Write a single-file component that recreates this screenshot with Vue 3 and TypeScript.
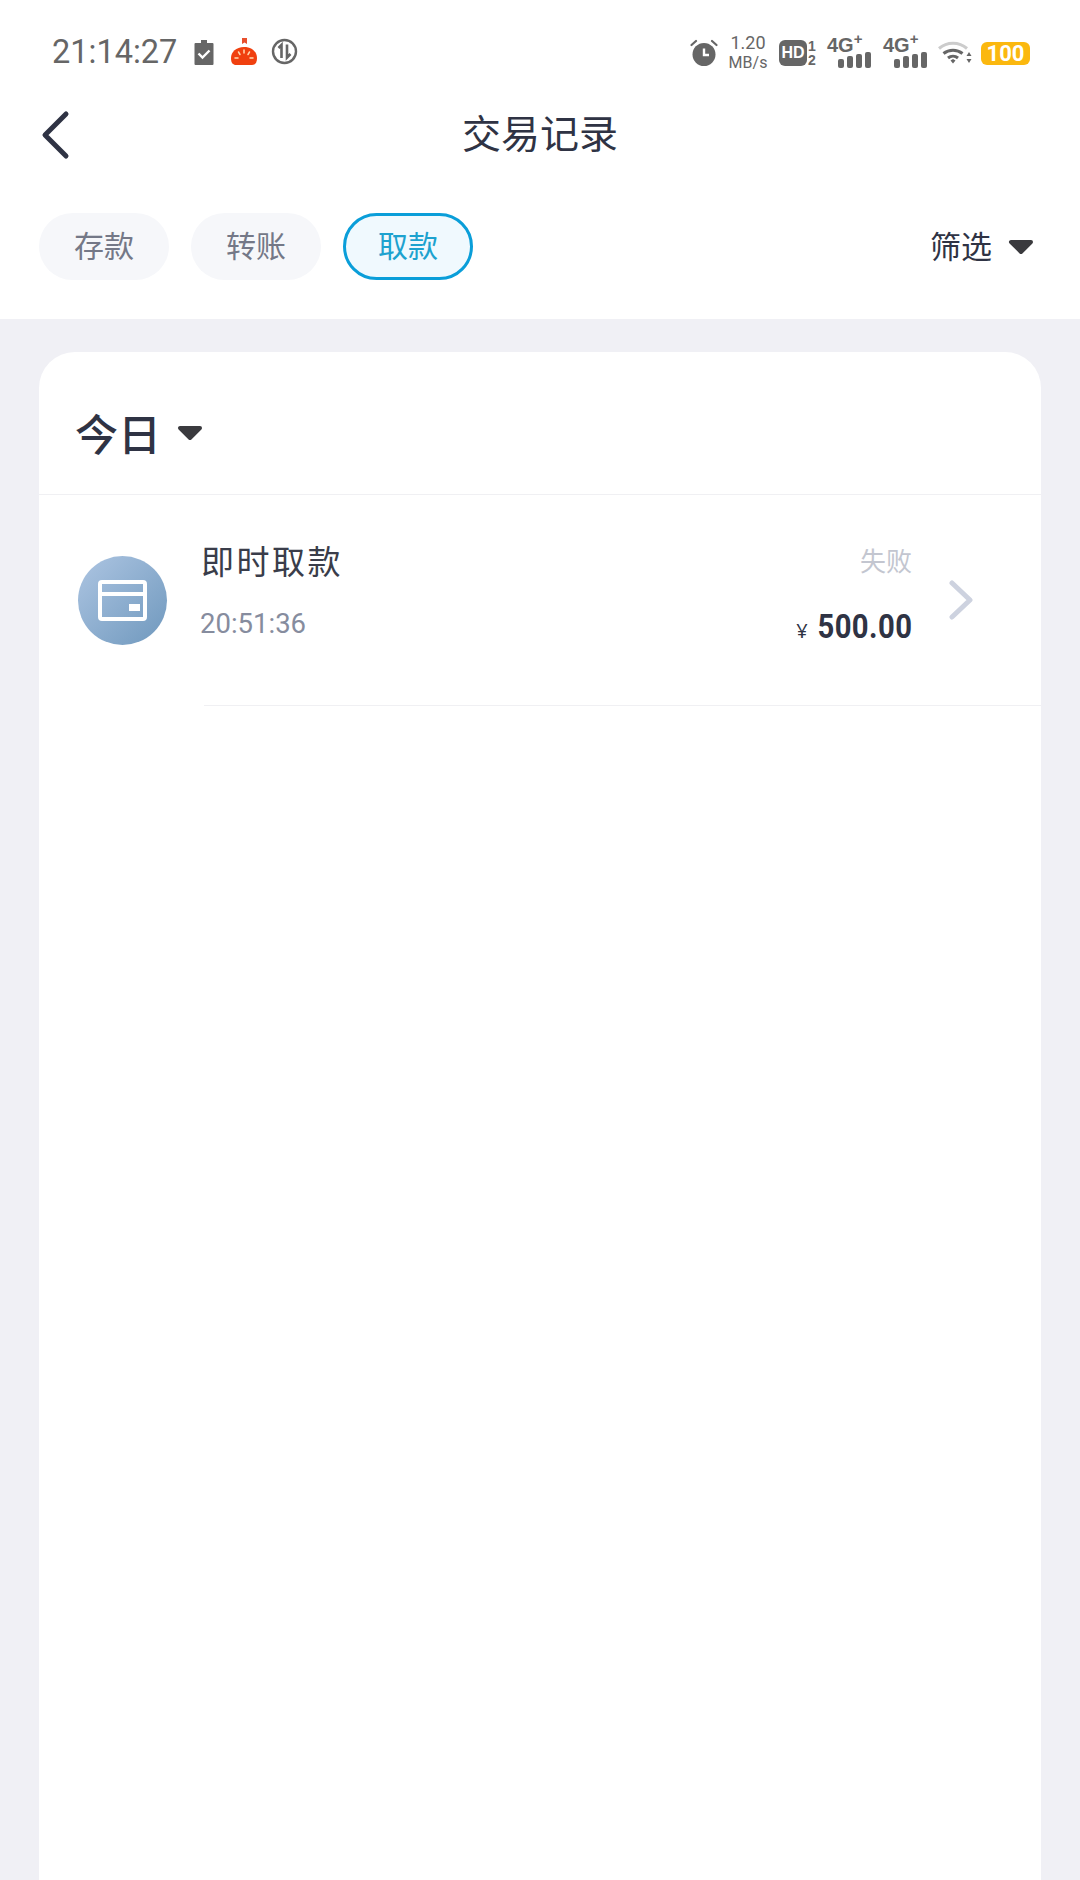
<template>
  <div class="page">
    <header class="top">
      <div class="status-bar">
        <div class="status-left">
          <span class="clock">21:14:27</span>
          <svg class="ic-task" width="20" height="26" viewBox="0 0 20 26">
            <path d="M7 1h6v3h5.500a1 1 0 0 1 1 1V25a1 1 0 0 1-1 1H1.500a1 1 0 0 1-1-1V5a1 1 0 0 1 1-1H7z" fill="#666" />
            <path d="M4.500 14.500l4 4 7-7" fill="none" stroke="#fff" stroke-width="2.400" />
          </svg>
          <svg class="ic-app" width="28" height="28" viewBox="0 0 28 28">
            <path d="M12 0h5v6l-2.500-1.500L12 6z" fill="#e8502e" />
            <path d="M14 9c8 0 13 5 13 11 0 5-2 7-5 7H6c-3 0-5-2-5-7C1 14 6 9 14 9z" fill="#f0400f" />
            <path d="M14 12v3M8.500 14l1.500 2.500M19.500 14L18 16.500M5 20h3M20 20h3" stroke="#ffd9b0" stroke-width="1.500" stroke-linecap="round" />
          </svg>
          <svg class="ic-data" width="27" height="27" viewBox="0 0 27 27">
            <circle cx="13.500" cy="13.500" r="11.500" fill="none" stroke="#666" stroke-width="2.400" />
            <path d="M10.500 20V7L7.500 10M16 6.500v13l3.500-3.500" fill="none" stroke="#666" stroke-width="2.600" />
          </svg>
        </div>
        <div class="status-right">
          <svg class="ic-alarm" width="28" height="28" viewBox="0 0 28 28">
            <path d="M1.500 6L6 2M26.500 6L22 2" stroke="#666" stroke-width="2.200" stroke-linecap="round" />
            <circle cx="14" cy="15.500" r="11.500" fill="#666" />
            <path d="M14 9.500v6.500h5" fill="none" stroke="#fff" stroke-width="2.400" />
          </svg>
          <div class="speed"><span class="speed-num">1.20</span><span>MB/s</span></div>
          <div class="hd">
            <span class="hd-box">HD</span>
            <span class="hd-nums"><span>1</span><span>2</span></span>
          </div>
          <div v-for="n in 2" :key="n" class="signal">
            <span class="net">4G<sup>+</sup></span>
            <div class="bars">
              <i v-for="h in barHeights" :key="h" :style="{ height: h + 'px' }"></i>
            </div>
          </div>
          <svg class="ic-wifi" width="34" height="26" viewBox="0 0 34 26">
            <path d="M1 8.500C9 1.500 21 1.500 29 8.500" fill="none" stroke="#ccc" stroke-width="3" />
            <path d="M5.500 13.500c5.500-4.500 13.500-4.500 19 0" fill="none" stroke="#666" stroke-width="3" />
            <path d="M10 18c3-2.500 7-2.500 10 0" fill="none" stroke="#666" stroke-width="3" />
            <path d="M12.500 20.500l2.500-1.500 2.500 1.500-2.500 3z" fill="#666" />
            <path d="M31 12l2.500 4h-5zM31 23l-2.500-4h5z" fill="#666" />
          </svg>
          <div class="battery">100</div>
        </div>
      </div>

      <div class="nav">
        <svg class="back" width="30" height="50" viewBox="0 0 30 50">
          <path d="M26 4L5 25l21 21" fill="none" stroke="#2f3344" stroke-width="5" stroke-linecap="round" stroke-linejoin="round" />
        </svg>
        <h1 class="title">交易记录</h1>
      </div>

      <div class="tabs">
        <button
          v-for="tab in tabs"
          :key="tab"
          class="tab"
          :class="{ active: tab === currentTab }"
          @click="currentTab = tab"
        >
          {{ tab }}
        </button>
        <div class="filter">
          <span class="filter-label">筛选</span>
          <svg class="caret" width="26" height="16" viewBox="0 0 26 16">
            <path d="M3 3h20L13 13z" fill="#3a3a3e" stroke="#3a3a3e" stroke-width="4" stroke-linejoin="round" />
          </svg>
        </div>
      </div>
    </header>

    <main class="content">
      <section class="card">
        <div class="card-head">
          <span>今日</span>
          <svg class="caret" width="26" height="16" viewBox="0 0 26 16">
            <path d="M3 3h20L13 13z" fill="#3a3a3e" stroke="#3a3a3e" stroke-width="4" stroke-linejoin="round" />
          </svg>
        </div>
        <div class="record">
          <div class="avatar">
            <svg width="49" height="41" viewBox="0 0 49 41">
              <rect x="2" y="2" width="45" height="37" rx="2" fill="none" stroke="#fff" stroke-width="4" />
              <rect x="2" y="12" width="45" height="4" fill="#fff" />
              <rect x="31" y="24" width="11" height="7" fill="#fff" />
            </svg>
          </div>
          <div class="record-main">
            <div class="record-name">{{ record.name }}</div>
            <div class="record-time">{{ record.time }}</div>
          </div>
          <div class="record-side">
            <div class="record-status">{{ record.status }}</div>
            <div class="record-amount"><small>¥</small><span class="amount-num">{{ record.amount }}</span></div>
          </div>
          <svg class="arrow" width="24" height="40" viewBox="0 0 24 40">
            <path d="M3 3l18 17L3 37" fill="none" stroke="#cdd2df" stroke-width="5" stroke-linecap="round" stroke-linejoin="round" />
          </svg>
        </div>
      </section>
    </main>
  </div>
</template>

<script setup lang="ts">
import { ref } from 'vue';

interface TradeRecord {
  name: string;
  time: string;
  status: string;
  amount: string;
}

const tabs = ['存款', '转账', '取款'];
const currentTab = ref('取款');
const barHeights = [9, 12, 14, 16];

const record: TradeRecord = {
  name: '即时取款',
  time: '20:51:36',
  status: '失败',
  amount: '500.00',
};
</script>

<style>
html,
body {
  margin: 0;
  background: #f0f0f5;
}
</style>

<style scoped>
.page {
  width: 1080px;
  height: 1880px;
  overflow: hidden;
  display: flex;
  flex-direction: column;
  background: #f0f0f5;
  font-family: "Noto Sans", "Noto Sans CJK SC", sans-serif;
}

.top {
  height: 319px;
  box-sizing: border-box;
  background: #fff;
  flex: none;
}

.status-bar {
  height: 88px;
  padding: 15px 50px 0 52px;
  box-sizing: border-box;
  display: flex;
  align-items: center;
  justify-content: space-between;
  color: #666;
}

.status-left,
.status-right {
  display: flex;
  align-items: center;
}

.status-right {
  margin-top: 3px;
}

.clock {
  font-family: Roboto, sans-serif;
  font-size: 32.500px;
  margin-right: 17px;
}

.ic-app {
  margin-left: 16px;
}

.ic-data {
  margin-left: 13px;
}

.speed {
  width: 38px;
  display: flex;
  flex-direction: column;
  align-items: center;
  margin-left: 11px;
  font-family: Roboto, sans-serif;
  font-size: 16px;
  line-height: 20px;
  white-space: nowrap;
}

.speed-num {
  font-size: 18px;
}

.hd {
  width: 37px;
  display: flex;
  align-items: center;
  margin-left: 12px;
}

.hd-box {
  width: 28px;
  height: 26px;
  border-radius: 6px;
  background: #666;
  color: #fff;
  font: 700 16px/26px "Liberation Sans", sans-serif;
  text-align: center;
}

.hd-nums {
  display: flex;
  flex-direction: column;
  margin-left: 1px;
  font: 700 14px/14px "Liberation Sans", sans-serif;
}

.signal {
  width: 44px;
  height: 30px;
  margin-left: 11px;
  position: relative;
}

.signal + .signal {
  margin-left: 12px;
}

.net {
  display: block;
  font: 700 20px/16px "Liberation Sans", sans-serif;
  margin-top: -1px;
  white-space: nowrap;
}

.net sup {
  font-size: 15px;
  line-height: 0;
}

.bars {
  position: absolute;
  right: 0;
  bottom: 0;
  display: flex;
  align-items: flex-end;
  gap: 3px;
}

.bars i {
  width: 6px;
  border-radius: 2px;
  background: #666;
}

.ic-wifi {
  margin-left: 11px;
}

.battery {
  width: 49px;
  height: 23px;
  margin-left: 9px;
  border-radius: 6px;
  background: #fbb80f;
  color: #fff;
  font: 700 22px/23px Roboto, sans-serif;
  text-align: center;
}

.nav {
  height: 70px;
  display: flex;
  align-items: center;
  justify-content: center;
  position: relative;
  margin-top: 8px;
}

.back {
  position: absolute;
  left: 40px;
  top: 14px;
}

.title {
  margin: 0;
  font-size: 39px;
  font-weight: 400;
  color: #2f3344;
}

.tabs {
  display: flex;
  align-items: center;
  gap: 22px;
  margin-top: 47px;
  padding: 0 46px 0 39px;
}

.tab {
  width: 130px;
  height: 67px;
  padding: 0 0 2px;
  border: 3px solid transparent;
  border-radius: 34px;
  background: #f6f7fa;
  color: #747887;
  font-family: inherit;
  font-size: 30px;
  line-height: 1;
}

.tab.active {
  border-color: #0a9ed9;
  background: #f0f9fe;
  color: #1da2cf;
}

.filter {
  margin-left: auto;
  display: flex;
  align-items: center;
  gap: 16px;
  color: #2f3344;
  font-size: 31px;
}

.filter-label {
  margin-top: -4px;
}

.filter .caret {
  margin-top: 1px;
}

.caret {
  flex: none;
}

.content {
  flex: 1;
  padding: 33px 39px 0;
}

.card {
  height: 100%;
  border-radius: 36px 36px 0 0;
  background: #fff;
}

.card-head {
  height: 143px;
  box-sizing: border-box;
  padding: 18px 0 0 36px;
  display: flex;
  align-items: center;
  gap: 16px;
  border-bottom: 1px solid #f0f0f3;
  color: #2f3344;
  font-size: 43px;
  font-weight: 500;
}

.card-head .caret {
  margin-top: 2px;
}

.record {
  height: 211px;
  box-sizing: border-box;
  padding-left: 39px;
  display: flex;
  align-items: center;
  position: relative;
}

.record::after {
  content: "";
  position: absolute;
  left: 165px;
  right: 0;
  bottom: 0;
  border-bottom: 1px solid #f0f0f3;
}

.avatar {
  width: 89px;
  height: 89px;
  flex: none;
  border-radius: 50%;
  display: flex;
  align-items: center;
  justify-content: center;
  background: linear-gradient(135deg, #adc5e2, #6f98bd);
}

.record-main {
  margin-left: 34px;
  margin-top: -22px;
  flex: 1;
}

.record-name {
  font-size: 33px;
  line-height: 48px;
  letter-spacing: 2.500px;
  color: #3a3d4a;
}

.record-time {
  margin-top: 20px;
  font-family: Roboto, sans-serif;
  font-size: 27.500px;
  line-height: 36px;
  margin-left: -1px;
  color: #868c9e;
}

.record-side {
  text-align: right;
  margin-right: 37px;
  margin-top: -6px;
}

.record-status {
  font-size: 26px;
  line-height: 38px;
  color: #c3c6d0;
}

.record-amount {
  margin-top: 24px;
  font-family: Roboto, sans-serif;
  font-size: 34px;
  line-height: 44px;
  font-weight: 700;
  color: #2f3344;
}

.amount-num {
  display: inline-block;
  letter-spacing: 0.500px;
  transform: scaleX(0.86);
  transform-origin: right center;
}

.record-amount small {
  margin-right: -6px;
  font-family: "Noto Sans", sans-serif;
  font-size: 20px;
  font-weight: 400;
}

.arrow {
  margin-right: 68px;
  margin-top: -2px;
  flex: none;
}
</style>
